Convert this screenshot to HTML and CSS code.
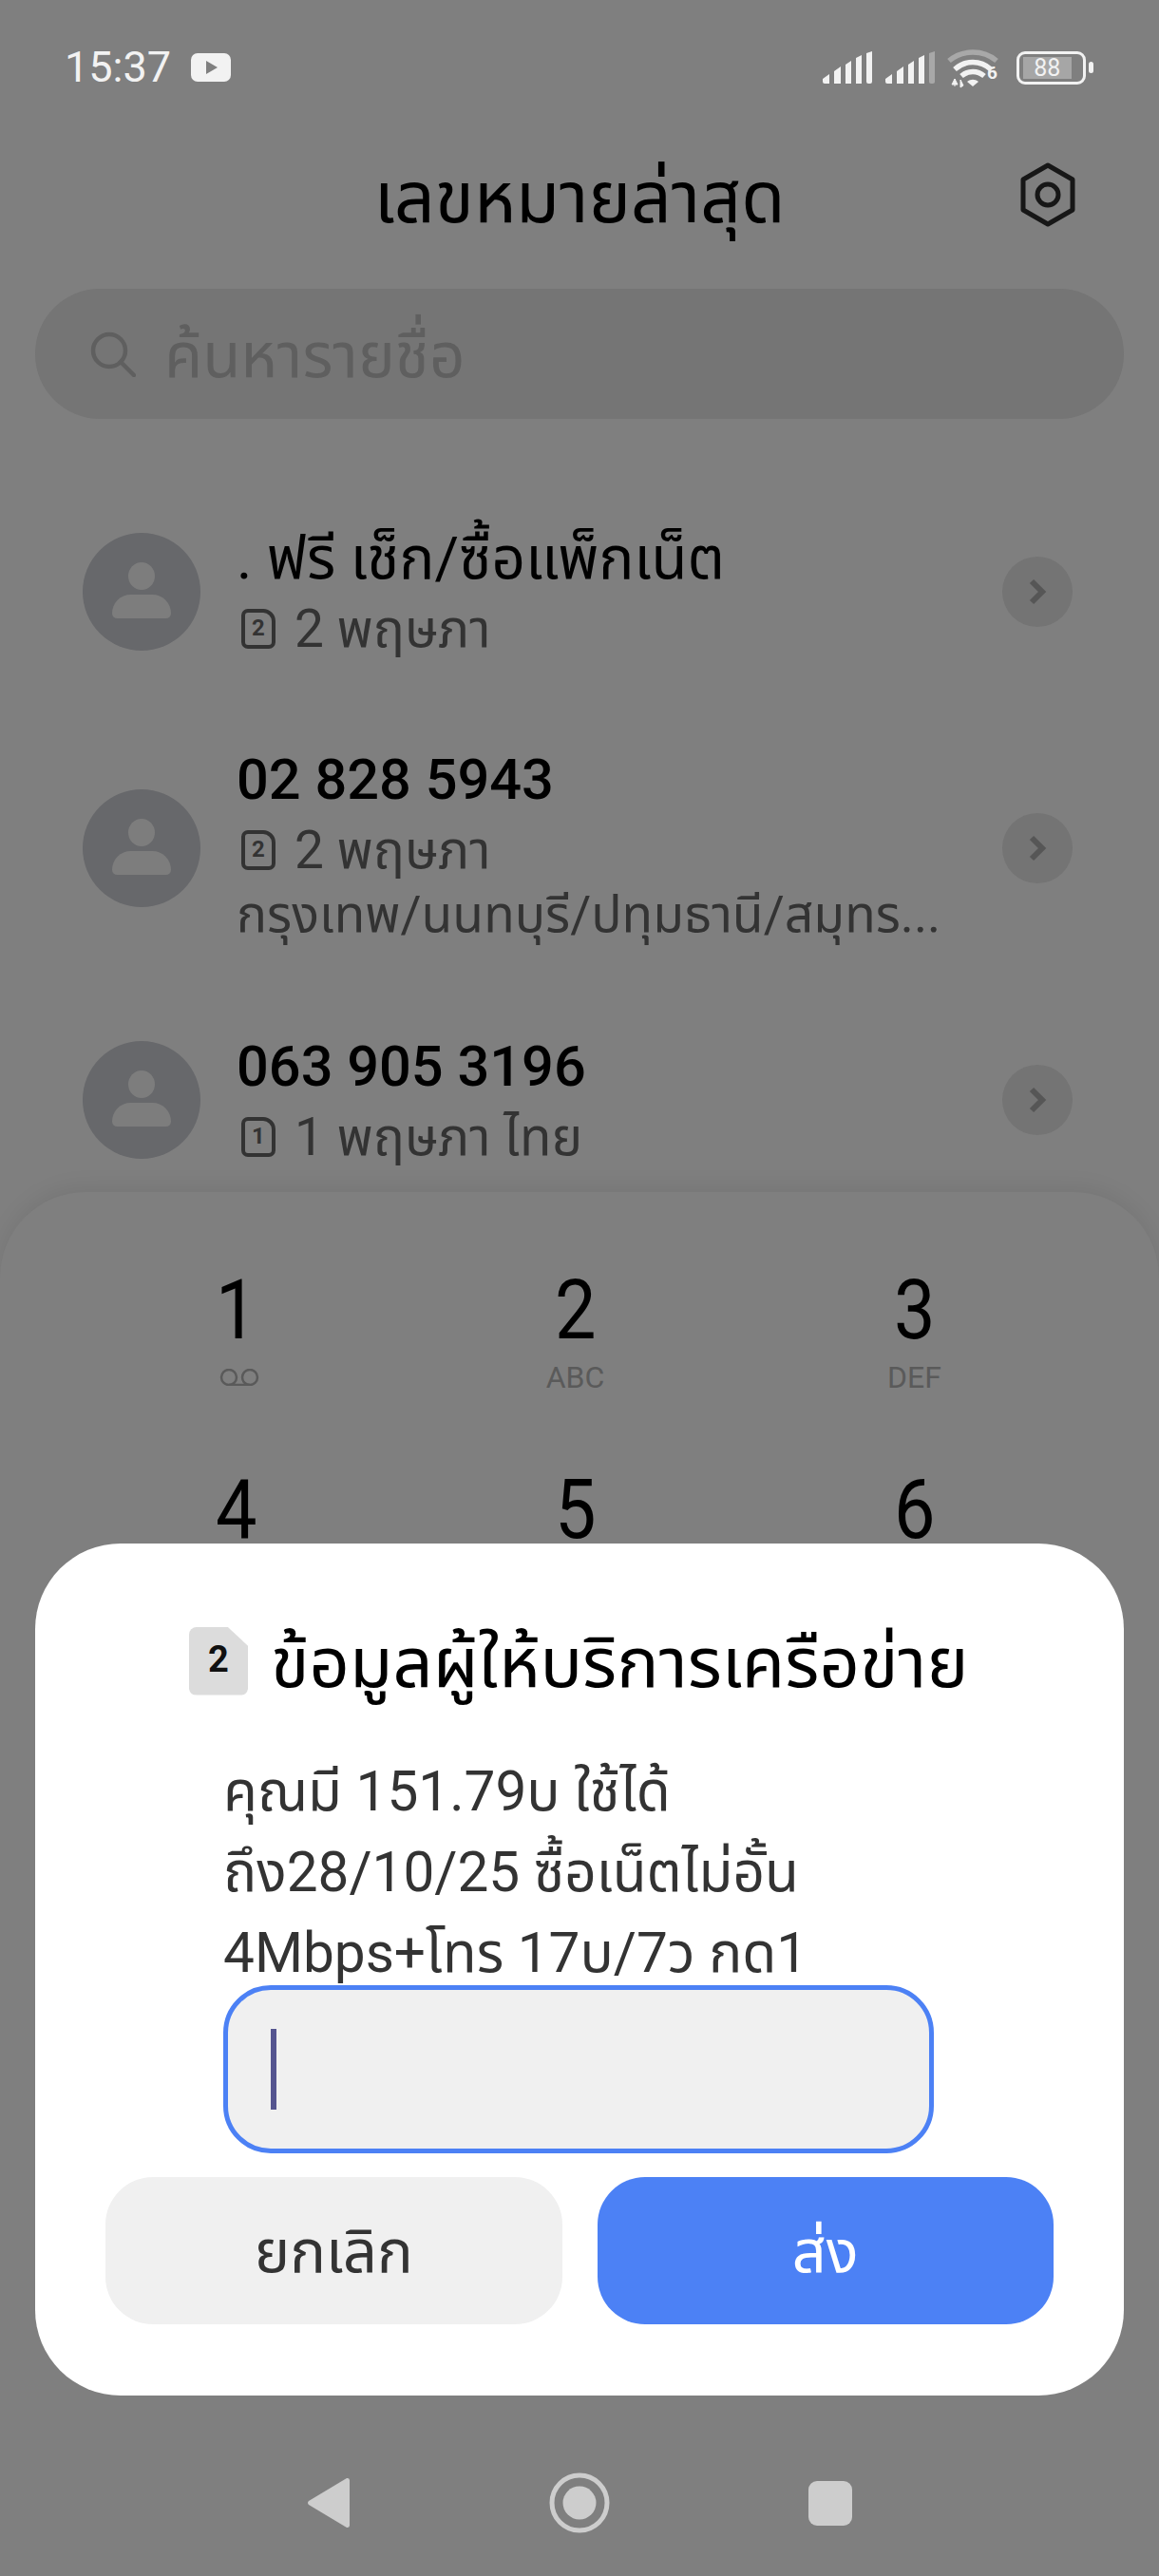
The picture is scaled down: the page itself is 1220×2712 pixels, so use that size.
FILE: index.html
```html
<!DOCTYPE html>
<html lang="th">
<head>
    <title>เลขหมายล่าสุด</title>
    <link rel="stylesheet" href="styles.css">
</head>
<body>
    <div class="page">
        <!-- status bar -->
        <div class="status">
            <span class="time">15:37</span>
            <svg class="yt" width="42" height="30" viewBox="0 0 42 30"><rect width="42" height="30" rx="7" fill="#f2f2f2"/><path d="M16 8l12 7-12 7z" fill="#7f7f7f"/></svg>
            <div class="status-right">
                <svg width="52" height="34" viewBox="0 0 52 34" fill="#f2f2f2"><path d="M0 29l7-5v10H2a2 2 0 0 1-2-2zM12 21l7-5v18h-7zM24 14l6-4v24h-6zM35 7l6-3v30h-6zM46 2l6-2v32a2 2 0 0 1-2 2h-2a2 2 0 0 1-2-2z"/></svg>
                <svg class="sim2" width="52" height="34" viewBox="0 0 52 34" fill="#f2f2f2"><path d="M0 29l7-5v10H2a2 2 0 0 1-2-2zM12 21l7-5v18h-7zM24 14l6-4v24h-6zM35 7l6-3v30h-6z"/><path fill="#a8a8a8" d="M46 2l6-2v32a2 2 0 0 1-2 2h-2a2 2 0 0 1-2-2z"/></svg>
                <svg class="wifi" width="56" height="44" viewBox="0 0 56 44" fill="none"><path d="M2 13C16 1 38 1 52 13" stroke="#a8a8a8" stroke-width="5.500"/><path d="M8 22c11-10 27-10 38 0M15 29c7-6 17-6 24 0" stroke="#f2f2f2" stroke-width="5.500"/><path d="M21 35c4-3 8-3 12 0l-6 5z" fill="#f2f2f2"/><path d="M8 32v8M5 38h6l-3-6zM14 41v-8l3 6z" fill="#f2f2f2" stroke="#f2f2f2" stroke-width="1"/></svg>
                <span class="wifi-six">6</span>
                <div class="battery"><div class="battery-fill"><span class="battery-num">88</span></div></div>
                <div class="battery-tip"></div>
            </div>
        </div>

        <div class="header">
            <h1 class="title">เลขหมายล่าสุด</h1>
            <svg class="settings" width="62" height="68" viewBox="0 0 62 68" fill="none" stroke="#171717" stroke-width="5"><path d="M31 3l26 15v32L31 65 5 50V18z" stroke-linejoin="round"/><circle cx="31" cy="34" r="11"/></svg>
        </div>

        <div class="search">
            <svg width="48" height="48" viewBox="0 0 48 48" fill="none" stroke="#5f5f5f" stroke-width="4.5"><circle cx="20" cy="20" r="17"/><path d="M32 32l14 14" stroke-linecap="round"/></svg>
            <span class="search-text">ค้นหารายชื่อ</span>
        </div>

        <div class="list">
            <div class="row row-one">
                <div class="avatar"><span class="head"></span><span class="shoulders"></span></div>
                <div class="row-text">
                    <div class="name name-thai">. ฟรี เช็ก/ซื้อแพ็กเน็ต</div>
                    <div class="sub"><span class="sim-mark">2</span>2 พฤษภา</div>
                </div>
                <div class="go"><svg width="22" height="30" viewBox="0 0 22 30" fill="none" stroke="#565656" stroke-width="6"><path d="M5 4l11 11L5 26"/></svg></div>
            </div>
            <div class="row row-two">
                <div class="avatar"><span class="head"></span><span class="shoulders"></span></div>
                <div class="row-text">
                    <div class="name">02 828 5943</div>
                    <div class="sub"><span class="sim-mark">2</span>2 พฤษภา</div>
                    <div class="sub sub-place">กรุงเทพ/นนทบุรี/ปทุมธานี/สมุทร...</div>
                </div>
                <div class="go"><svg width="22" height="30" viewBox="0 0 22 30" fill="none" stroke="#565656" stroke-width="6"><path d="M5 4l11 11L5 26"/></svg></div>
            </div>
            <div class="row row-three">
                <div class="avatar"><span class="head"></span><span class="shoulders"></span></div>
                <div class="row-text">
                    <div class="name">063 905 3196</div>
                    <div class="sub"><span class="sim-mark">1</span>1 พฤษภา ไทย</div>
                </div>
                <div class="go"><svg width="22" height="30" viewBox="0 0 22 30" fill="none" stroke="#565656" stroke-width="6"><path d="M5 4l11 11L5 26"/></svg></div>
            </div>
        </div>

        <!-- dial pad, mostly behind the dialog -->
        <div class="dialpad">
            <div class="keys">
                <div class="key"><span class="digit">1</span>
                    <svg class="voicemail" width="42" height="18" viewBox="0 0 42 18" fill="none" stroke="#5a5a5a" stroke-width="2.5"><circle cx="10" cy="9" r="8"/><circle cx="32" cy="9" r="8"/><path d="M10 17h22"/></svg>
                </div>
                <div class="key"><span class="digit">2</span><span class="letters">ABC</span></div>
                <div class="key"><span class="digit">3</span><span class="letters">DEF</span></div>
                <div class="key"><span class="digit">4</span></div>
                <div class="key"><span class="digit">5</span></div>
                <div class="key"><span class="digit">6</span></div>
            </div>
            <div class="nav">
                <svg width="46" height="54" viewBox="0 0 46 54" fill="#cdcdcd"><path d="M42 1a2.500 2.500 0 0 1 3 2v48a2.500 2.500 0 0 1-3 2L2 29a2.800 2.800 0 0 1 0-4z"/></svg>
                <svg width="64" height="64" viewBox="0 0 64 64" fill="#cdcdcd"><circle cx="32" cy="32" r="29" fill="none" stroke="#cdcdcd" stroke-width="5"/><circle cx="32" cy="32" r="17.500"/></svg>
                <div class="nav-square"></div>
            </div>
        </div>
    </div>

    <div class="dialog">
        <div class="dialog-head">
            <span class="sim-badge">2</span>
            <h2 class="dialog-title">ข้อมูลผู้ให้บริการเครือข่าย</h2>
        </div>
        <p class="message">คุณมี 151.79บ ใช้ได้<br>ถึง28/10/25 ซื้อเน็ตไม่อั้น<br>4Mbps+โทร 17บ/7ว กด1</p>
        <div class="field"><span class="caret"></span></div>
        <div class="actions">
            <div class="btn btn-cancel">ยกเลิก</div>
            <div class="btn btn-send">ส่ง</div>
        </div>
    </div>
</body>
</html>
```

FILE: styles.css
```css
* {
    box-sizing: border-box;
}

html, body {
    margin: 0;
    padding: 0;
    height: 2712px;
    overflow: hidden;
}

body {
    position: relative;
    background-color: #7f7f7f;
    font-family: Roboto, "Noto Sans Thai", "Noto Sans", sans-serif;
}

.page {
    display: flex;
    flex-direction: column;
    height: 2712px;
}

/* status bar */
.status {
    display: flex;
    align-items: center;
    height: 142px;
    padding: 0 69px 0 68px;
    flex-shrink: 0;
}

.time {
    color: #f2f2f2;
    font-size: 45px;
    line-height: 44px;
    width: 133px;
}

.status-right {
    margin-left: auto;
    display: flex;
    align-items: center;
    position: relative;
}

.sim2 {
    margin-left: 14px;
}

.wifi {
    margin-left: 13px;
    margin-top: 4px;
}

.wifi-six {
    position: absolute;
    left: 173px;
    top: 18px;
    color: #f2f2f2;
    font-size: 19px;
    font-weight: 700;
}

.battery {
    margin-left: 17px;
    width: 73px;
    height: 35px;
    border: 3.5px solid #f2f2f2;
    border-radius: 9px;
    padding: 3px 12px 3px 3.5px;
}

.battery-fill {
    height: 100%;
    background-color: #a6a6a6;
    text-align: center;
    color: #f2f2f2;
    font-size: 25px;
    line-height: 23px;
}

.battery-tip {
    width: 5px;
    height: 12px;
    margin-left: 3px;
    background-color: #f2f2f2;
    border-radius: 3px;
}

/* title row */
.header {
    position: relative;
    height: 162px;
    flex-shrink: 0;
    display: flex;
    justify-content: center;
}

.title {
    margin: 0;
    color: #000;
    font-size: 75px;
    font-weight: 400;
    line-height: 80px;
    padding-top: 26px;
}

.settings {
    position: absolute;
    right: 86px;
    top: 29px;
}

.search {
    margin: 0 37px;
    height: 137px;
    flex-shrink: 0;
    border-radius: 68px;
    background-color: #757575;
    display: flex;
    align-items: center;
    padding-left: 58px;
    gap: 30px;
}

.search-text {
    color: #5f5f5f;
    font-size: 65.5px;
    line-height: 80px;
    padding-top: 4px;
}

/* call log */
.list {
    height: 814px;
    flex-shrink: 0;
    overflow: hidden;
}

.row {
    display: flex;
    align-items: center;
    padding: 0 91px 0 87px;
}

.row-one {
    padding-top: 120px;
    height: 244px;
}

.row-two {
    margin-top: 60px;
    height: 296px;
}

.row-three {
    height: 234px;
}

.avatar {
    position: relative;
    width: 124px;
    height: 124px;
    border-radius: 50%;
    background-color: #67686b;
    flex-shrink: 0;
}

.head {
    position: absolute;
    left: 48px;
    top: 31px;
    width: 28px;
    height: 29px;
    border-radius: 50%;
    background-color: #7d7d7d;
}

.shoulders {
    position: absolute;
    left: 31px;
    top: 65px;
    width: 62px;
    height: 25px;
    border-radius: 22px 22px 6px 6px;
    background-color: #7d7d7d;
}

.row-text {
    flex: 1;
    margin-left: 38px;
    padding-top: 5px;
}

.row-two .row-text {
    padding-bottom: 13px;
}

.name {
    color: #000;
    font-size: 59.5px;
    font-weight: 500;
    line-height: 72px;
}

.name-thai {
    font-size: 62px;
    font-weight: 400;
}

.sub {
    display: flex;
    align-items: center;
    color: #333;
    font-size: 55px;
    line-height: 76px;
    white-space: nowrap;
}

.sub-place {
    font-size: 53.5px;
    line-height: 60px;
}

.sim-mark {
    width: 36px;
    height: 42px;
    margin: 0 20px 0 5px;
    border: 4px solid #333;
    border-radius: 7px 13px 7px 7px;
    font-size: 24px;
    font-weight: 700;
    line-height: 33px;
    text-align: center;
}

.go {
    width: 74px;
    height: 74px;
    border-radius: 50%;
    background-color: #747474;
    display: flex;
    align-items: center;
    justify-content: center;
    flex-shrink: 0;
}

/* dial pad */
.dialpad {
    flex: 1;
    display: flex;
    flex-direction: column;
    border-radius: 90px 90px 0 0;
    background-color: #7f7f7f;
    box-shadow: 0 -6px 22px rgba(0, 0, 0, 0.07);
    padding-top: 80px;
    overflow: hidden;
}

.keys {
    display: grid;
    grid-template-columns: repeat(3, 357px);
    grid-auto-rows: 210px;
    padding-left: 70px;
}

.key {
    display: flex;
    flex-direction: column;
    align-items: center;
}

.digit {
    color: #000;
    font-size: 88px;
    font-weight: 400;
    line-height: 88px;
    transform: scaleX(0.88);
}

.letters {
    color: #5a5a5a;
    font-size: 32px;
    line-height: 34px;
    margin-top: 10px;
}

.voicemail {
    margin: 18px 0 0 6px;
}

.nav {
    margin-top: auto;
    height: 154px;
    display: flex;
    align-items: center;
    padding: 0 323px 0 323px;
    justify-content: space-between;
}

.nav-square {
    width: 46px;
    height: 47px;
    border-radius: 9px;
    background-color: #cdcdcd;
}

/* dialog on top of everything */
.dialog {
    position: absolute;
    left: 37px;
    top: 1625px;
    width: 1146px;
    height: 897px;
    border-radius: 90px;
    background-color: #fff;
    padding: 0 74px;
}

.dialog-head {
    display: flex;
    align-items: center;
    padding: 85px 0 0 88px;
    gap: 24px;
}

.sim-badge {
    width: 62px;
    height: 72px;
    background-color: #dcdcdc;
    border-radius: 8px;
    clip-path: polygon(0 0, 65% 0, 100% 28%, 100% 100%, 0 100%);
    text-align: center;
    color: #111;
    font-size: 38px;
    font-weight: 700;
    line-height: 68px;
}

.dialog-title {
    margin: 0;
    color: #000;
    font-size: 74px;
    font-weight: 400;
    line-height: 72px;
    padding-top: 5px;
    white-space: nowrap;
}

.message {
    margin: 57px 0 -9px 124px;
    color: #333;
    font-size: 58.5px;
    line-height: 85px;
    white-space: nowrap;
}

.field {
    margin: 0 0 0 124px;
    width: 748px;
    height: 177px;
    border: 5.5px solid #4c81f5;
    border-radius: 50px;
    background-color: #f0f0f0;
    padding: 41px 0 0 45px;
}

.caret {
    display: block;
    width: 6px;
    height: 85px;
    background-color: #55558f;
}

.actions {
    display: flex;
    gap: 37px;
    margin-top: 25px;
}

.btn {
    flex: 1;
    height: 155px;
    border-radius: 50px;
    display: flex;
    align-items: center;
    justify-content: center;
    font-size: 63px;
    padding-top: 5px;
}

.btn-cancel {
    background-color: #f0f0f0;
    color: #333;
}

.btn-send {
    background-color: #4c81f5;
    color: #fff;
}
```
